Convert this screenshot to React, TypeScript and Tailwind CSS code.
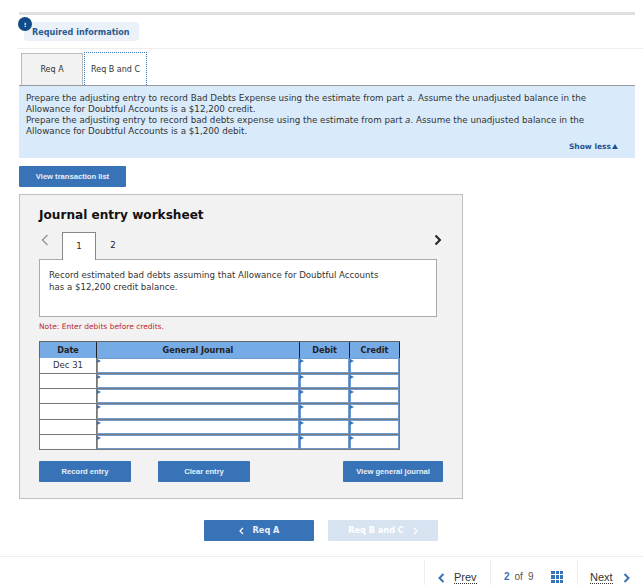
import React from "react";

const font = { fontFamily: '"DejaVu Sans", Verdana, sans-serif' };
const arial = { fontFamily: '"Liberation Sans", Arial, sans-serif' };

function Btn({ children, w }: { children: React.ReactNode; w: string }) {
  return (
    <div style={arial} className={`${w} h-[21px] bg-[#3873b8] rounded-[1px] flex items-center justify-center text-[#e8eff7] text-[7.6px] font-bold whitespace-nowrap`}>
      {children}
    </div>
  );
}

function EntryCell({ w }: { w: string }) {
  return (
    <div className={`${w} relative h-full bg-white border-r border-b border-[#7a7a7a] shadow-[inset_0_0_0_1px_#6f9bd0]`}>
      <span className="absolute left-0 top-[1px] w-0 h-0 border-y-[2.5px] border-y-transparent border-l-[4px] border-l-[#3873b8]" />
    </div>
  );
}

function Row({ date, h }: { date?: string; h: string }) {
  return (
    <div className={`flex ${h}`}>
      <div className="w-[58px] h-full bg-white border-l border-r border-b border-[#777] flex items-center justify-center text-[8.5px] text-[#333]">{date}</div>
      <EntryCell w="w-[203px]" />
      <EntryCell w="w-[50px]" />
      <EntryCell w="w-[50px]" />
    </div>
  );
}

export default function App() {
  return (
    <div className="w-[643px] h-[585px] bg-white overflow-hidden relative text-[#222]" style={font}>
      <div className="pt-3 pl-[19px] w-[635px]">
        <div className="h-[3px] bg-[#e0e0e0] w-[616px]" />
      </div>
      <div className="relative ml-6 mt-[7px] w-[115px] h-[19px] bg-[#eaf1f9] rounded-[4px] flex items-center pl-2 pt-px text-[8.1px] font-bold text-[#2a5a92] whitespace-nowrap">
        <span className="absolute -left-[6px] -top-[5px] w-[14px] h-[14px] rounded-full bg-[#114a85] text-white text-[6px] font-bold flex items-center justify-center">!</span>
        Required information
      </div>
      <div className="ml-[17px] mt-[7px] h-px bg-[#eeeeee]" />
      <div className="ml-[21px] mt-[3px] flex items-end h-[33px]">
        <div className="w-[62px] h-[32px] bg-[#f2f2f2] border border-[#bbbbbb] border-b-0 flex items-center justify-center text-[8px] text-[#333]">Req A</div>
        <div className="ml-px w-[63px] h-[33px] pt-px bg-white border border-[#3873b8] border-dotted border-b-0 flex items-center justify-center text-[8px] text-[#333]">Req B and C</div>
      </div>
      <div className="ml-[19px] w-[616px] h-[73px] bg-[#d9ebfa] border-t border-[#999] pl-[7px] pr-[45px] pt-[7px] relative text-[8.74px] leading-[11px] text-[#333]">
        <p>Prepare the adjusting entry to record Bad Debts Expense using the estimate from part <i>a</i>. Assume the unadjusted balance in the Allowance for Doubtful Accounts is a $12,200 credit.</p>
        <p>Prepare the adjusting entry to record bad debts expense using the estimate from part <i>a</i>. Assume the unadjusted balance in the Allowance for Doubtful Accounts is a $1,200 debit.</p>
        <div className="absolute right-[17px] bottom-[6px] flex items-center text-[7.5px] font-bold text-[#1f5290]">
          Show less
          <span className="ml-px w-0 h-0 border-x-[3px] border-x-transparent border-b-[5px] border-b-[#1f5290]" />
        </div>
      </div>
      <div className="ml-[19px] mt-2">
        <Btn w="w-[107px]">View transaction list</Btn>
      </div>
      <div className="ml-[19px] mt-[7px] w-[444px] h-[305px] bg-[#f2f2f2] border border-[#bfbfbf] pl-[19px] pt-[12px]">
        <h2 className="text-[12.1px] leading-[16px] font-bold text-[#111]">Journal entry worksheet</h2>
        <div className="mt-[8px] flex items-end h-[28px] w-[398px] relative">
          <svg className="absolute left-[1px] top-[3px]" width="10" height="12" viewBox="0 0 10 12" fill="none" stroke="#999" strokeWidth="1.5"><path d="M7.5 1 L2.5 6 L7.5 11" /></svg>
          <svg className="absolute right-[-6px] top-[3px]" width="10" height="12" viewBox="0 0 10 12" fill="none" stroke="#222" strokeWidth="2"><path d="M2.5 1.5 L7 6 L2.5 10.5" /></svg>
          <div className="ml-[23px] w-[34px] h-[28px] bg-white border border-[#888] border-b-0 flex items-center justify-center text-[8.65px] relative z-10 -mb-px">1</div>
          <div className="w-[34px] h-[27px] flex items-center justify-center text-[8.65px]">2</div>
        </div>
        <div className="w-[398px] h-[58px] bg-white border border-[#aaa] pl-[9px] pr-[40px] pt-[9px] text-[8.65px] leading-[12px] text-[#333]">
          Record estimated bad debts assuming that Allowance for Doubtful Accounts has a $12,200 credit balance.
        </div>
        <div className="mt-[5px] text-[7.5px] leading-[10px] text-[#c0272d]">Note: Enter debits before credits.</div>
        <div className="mt-[9px] w-[361px] h-[109px] flex flex-col">
          <div className="flex h-[17px] bg-[#76abe6] border border-[#666] border-b-0 text-[8.1px] font-bold text-[#222]">
            <div className="w-[57px] border-r border-[#222] flex items-center justify-center">Date</div>
            <div className="w-[203px] border-r border-[#222] flex items-center justify-center">General Journal</div>
            <div className="w-[50px] border-r border-[#222] flex items-center justify-center">Debit</div>
            <div className="flex-1 border-r border-[#222] -mr-px flex items-center justify-center">Credit</div>
          </div>
          <Row date="Dec 31" h="h-[16px]" />
          <Row h="h-[15px]" />
          <Row h="h-[15px]" />
          <Row h="h-[16px]" />
          <Row h="h-[15px]" />
          <Row h="h-[15px]" />
        </div>
        <div className="mt-[11px] flex w-[404px]">
          <Btn w="w-[92px]">Record entry</Btn>
          <div className="ml-[27px]"><Btn w="w-[92px]">Clear entry</Btn></div>
          <div className="ml-[93px]"><Btn w="w-[100px]">View general journal</Btn></div>
        </div>
      </div>
      <div className="ml-[204px] mt-[21px] flex gap-[14px]">
        <div className="w-[110px] h-[21px] bg-[#3873b8] rounded-[1px] flex items-center justify-center text-[#e8eff7] text-[8.2px] font-bold">
          <svg className="mr-[9px]" width="5" height="8" viewBox="0 0 5 8" fill="none" stroke="#fff" strokeWidth="1.2"><path d="M4 1 L1 4 L4 7" /></svg>
          Req A
        </div>
        <div className="w-[110px] h-[21px] bg-[#d7e3f1] rounded-[1px] flex items-center justify-center text-white text-[8.2px] font-bold">
          Req B and C
          <svg className="ml-[9px]" width="5" height="8" viewBox="0 0 5 8" fill="none" stroke="#fff" strokeWidth="1.2"><path d="M1 1 L4 4 L1 7" /></svg>
        </div>
      </div>
      <div className="mt-[15px] h-px bg-[#eeeeee]" />
      <div className="mt-[3px] ml-[424px] h-[26px] flex text-[10px]" style={arial}>
        <div className="w-[66px] h-full border-l border-[#eeeeee] flex items-end pb-[2px] pl-[13px]">
          <svg width="7" height="10" viewBox="0 0 7 10" fill="none" stroke="#3873b8" strokeWidth="2" className="mb-[1px]"><path d="M5.5 1 L1.5 5 L5.5 9" /></svg>
          <span className="ml-[9px] text-[11px] leading-[12px] text-[#333] border-b border-dotted border-[#333]">Prev</span>
        </div>
        <div className="w-[87px] h-full border-l border-[#eeeeee] flex items-end pb-[3px] pl-[13px]">
          <span className="font-bold text-[#3873b8] leading-[12px]">2</span>
          <span className="ml-[5px] text-[#555] leading-[12px]">of</span>
          <span className="ml-[5px] text-[#555] leading-[12px]">9</span>
          <div className="ml-[18px] grid grid-cols-3 gap-px w-[12px] h-[12px]">
            {Array.from({ length: 9 }).map((_, i) => <span key={i} className="bg-[#3873b8]" />)}
          </div>
        </div>
        <div className="flex-1 h-full border-l border-[#eeeeee] flex items-end pb-[2px] pl-[12px]">
          <span className="text-[11px] leading-[12px] text-[#333] border-b border-dotted border-[#333]">Next</span>
          <svg width="7" height="10" viewBox="0 0 7 10" fill="none" stroke="#3873b8" strokeWidth="2" className="ml-[10px] mb-[1px]"><path d="M1.5 1 L5.5 5 L1.5 9" /></svg>
        </div>
      </div>
    </div>
  );
}
